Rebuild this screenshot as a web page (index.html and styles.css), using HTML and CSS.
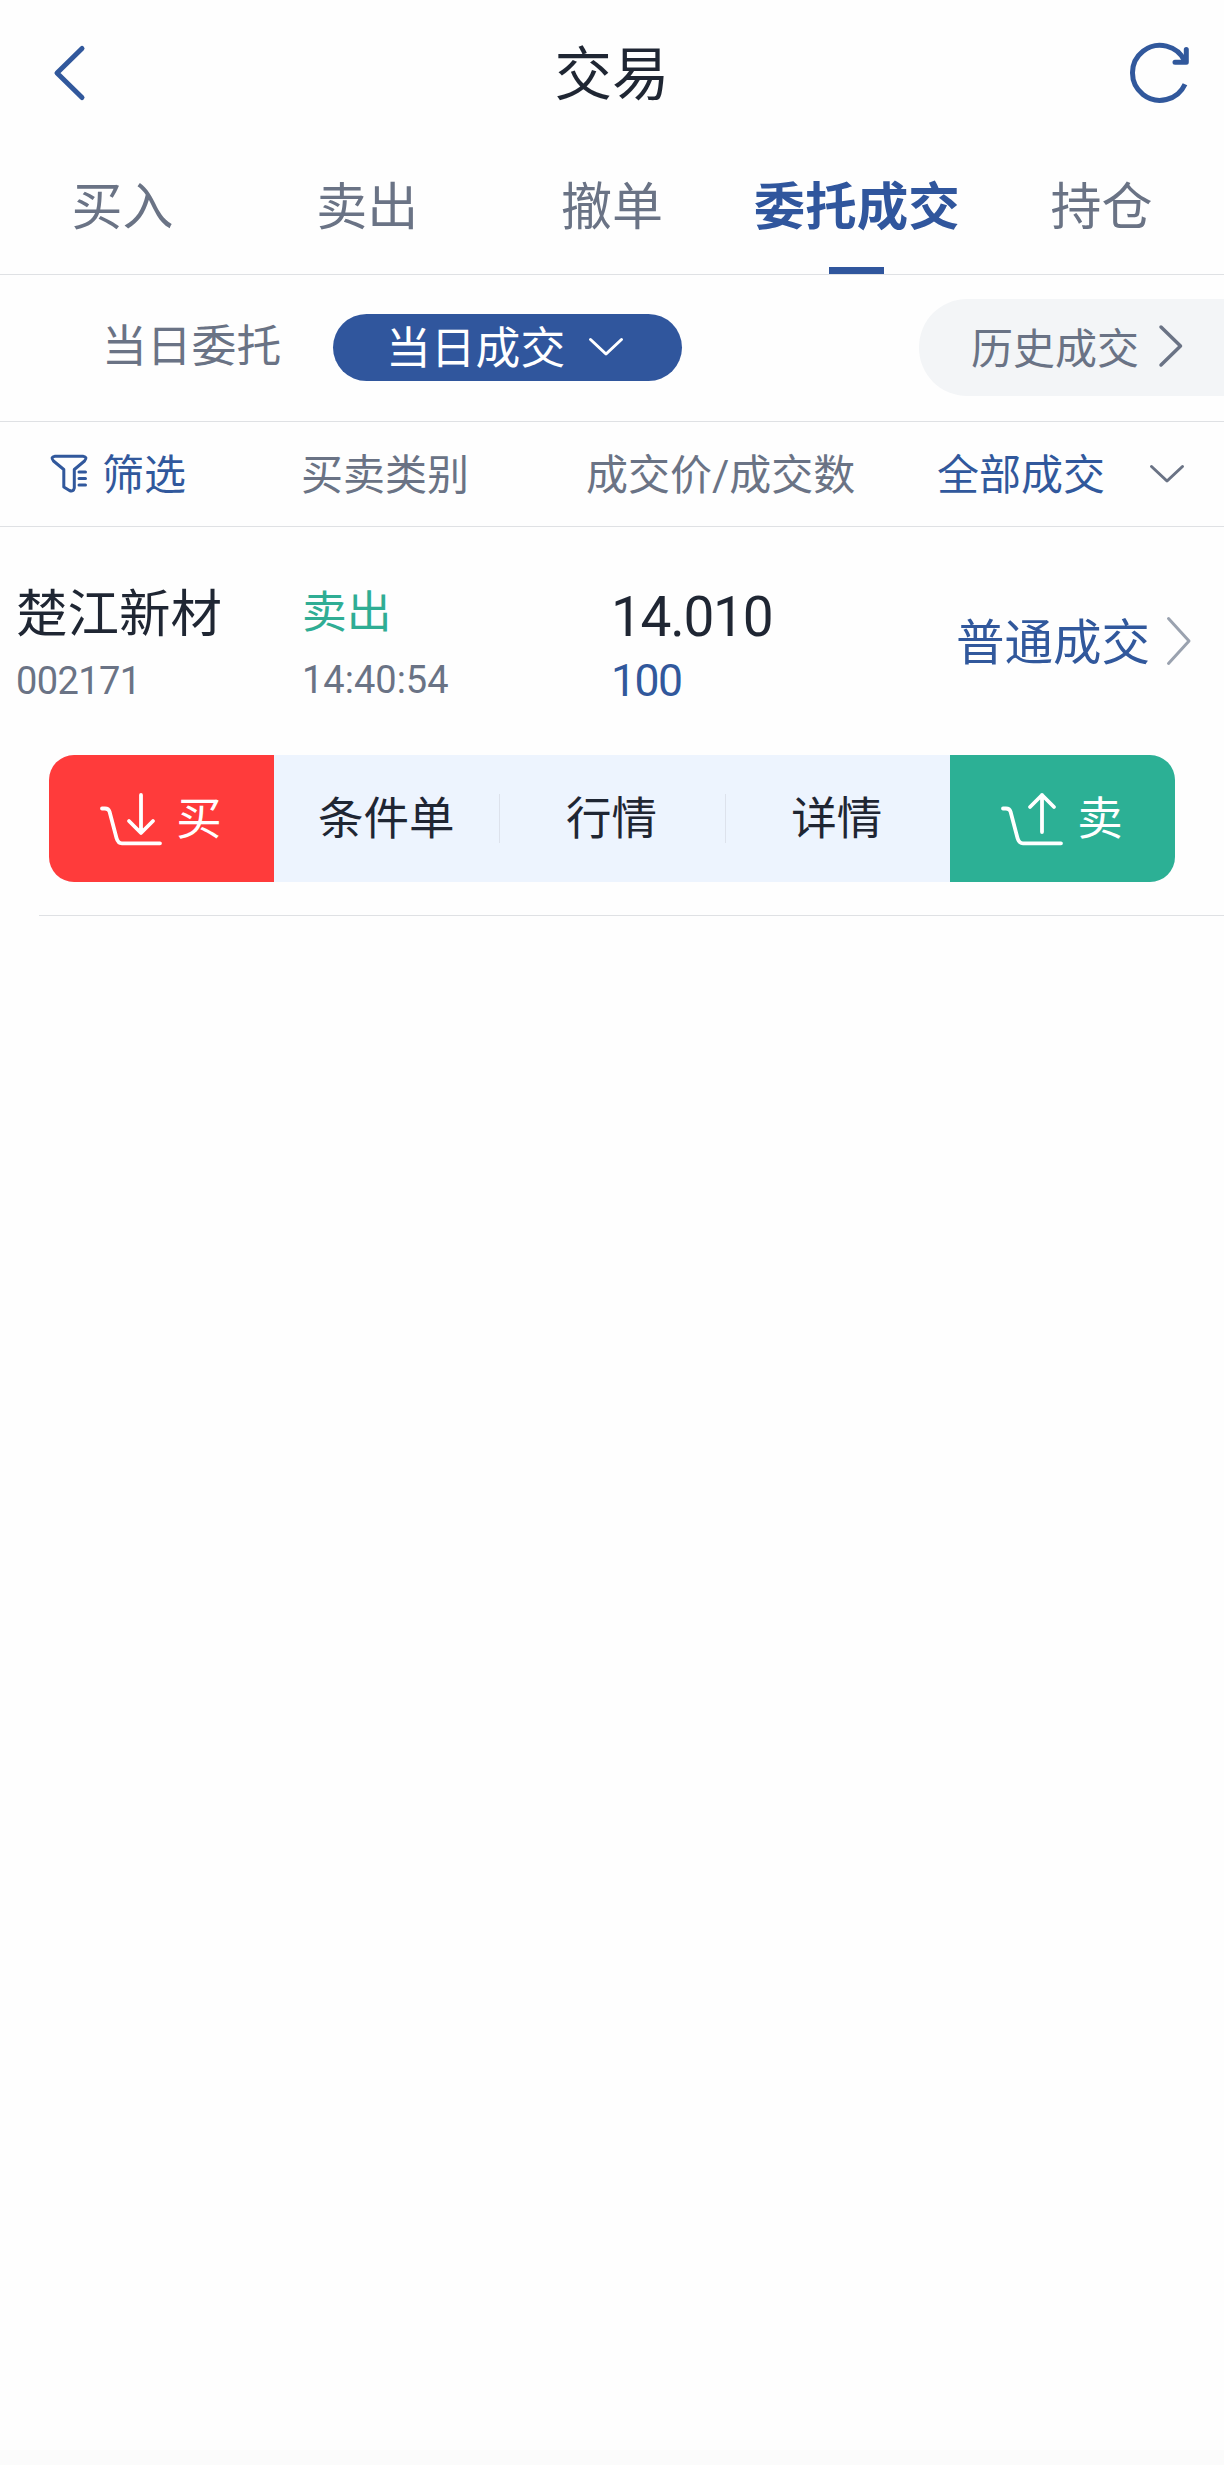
FILE: index.html
```html
<!DOCTYPE html>
<html lang="zh-CN">
<head>
<meta charset="utf-8">
<title>交易</title>
<link rel="stylesheet" href="styles.css">
</head>
<body>
<div class="app">
  <header class="topbar">
    <svg class="back" width="36" height="60" viewBox="0 0 36 60"><path d="M31 5.500L6 30L31 54.500"/></svg>
    <h1 class="title">交易</h1>
    <svg class="refresh" width="64" height="64" viewBox="0 0 64 64"><path d="M56 43.200A27.500 27.500 0 1 1 56 20.400"/><path class="arrow" d="M57.300 8.500V21.300H46"/></svg>
  </header>

  <nav class="tabs">
    <a class="tab">买入</a>
    <a class="tab">卖出</a>
    <a class="tab">撤单</a>
    <a class="tab tab-active">委托成交</a>
    <a class="tab">持仓</a>
  </nav>

  <section class="subtabs">
    <span class="today-orders">当日委托</span>
    <span class="today-deals">当日成交
      <svg width="36" height="20" viewBox="0 0 36 20"><path d="M2.500 2.500L18 17L33.500 2.500"/></svg>
    </span>
    <span class="history">历史成交
      <svg width="26" height="44" viewBox="0 0 26 44"><path d="M3 3L22.500 22L3 41"/></svg>
    </span>
  </section>

  <section class="columns">
    <span class="filter">
      <svg width="38" height="40" viewBox="0 0 38 40"><path d="M5 2.200H33Q38 3 34.500 7L24.300 15.500V34Q23.500 38 19.500 36.500L13.800 33V15.500L3.500 7Q0 3 5 2.200Z"/><path d="M29 18H35.500M29 24.500H35.500M29 31H35.500"/></svg>
      <span class="lift">筛选</span>
    </span>
    <span class="col-type lift">买卖类别</span>
    <span class="col-price lift">成交价/成交数</span>
    <span class="col-all lift">全部成交</span>
    <svg class="col-arrow" width="36" height="20" viewBox="0 0 36 20"><path d="M2.500 2.500L18 17L33.500 2.500"/></svg>
  </section>

  <article class="deal">
    <div class="deal-row">
      <div class="cell stock"><span class="name">楚江新材</span><span class="code">002171</span></div>
      <div class="cell side"><span class="direction">卖出</span><span class="time">14:40:54</span></div>
      <div class="cell amount"><span class="price">14.010</span><span class="qty">100</span></div>
      <div class="kind"><span class="lift">普通成交</span>
        <svg width="26" height="50" viewBox="0 0 26 50"><path d="M2.500 2.500L23 25L2.500 47.500"/></svg>
      </div>
    </div>
    <div class="actions">
      <a class="action buy"><svg width="62" height="56" viewBox="0 0 62 56"><path d="M2 17.500H5Q8.500 17.500 9.500 20.500L16.500 47Q18 52.300 22 52.300H60"/><path d="M41 4V41M29 30L41 42L53 30"/></svg>买</a>
      <a class="action">条件单</a>
      <a class="action divided">行情</a>
      <a class="action divided">详情</a>
      <a class="action sell"><svg width="62" height="56" viewBox="0 0 62 56"><path d="M2 17.500H5Q8.500 17.500 9.500 20.500L16.500 47Q18 52.300 22 52.300H60"/><path d="M41 41V4M29 16L41 4L53 16"/></svg>卖</a>
    </div>
  </article>
  <footer class="bottom"></footer>
</div>
</body>
</html>
```
FILE: styles.css
```css
* { box-sizing: border-box; }

body {
  margin: 0;
  background: #fefefe;
  color: #1f2633;
  font-family: Roboto, "Noto Sans CJK SC", sans-serif;
}

.app {
  width: 1224px;
  height: 2465px;
  display: flex;
  flex-direction: column;
  white-space: nowrap;
  overflow: hidden;
}

svg {
  display: block;
  flex: none;
  fill: none;
  stroke: currentColor;
  stroke-width: 3;
  stroke-linecap: round;
  stroke-linejoin: round;
}

.topbar {
  height: 146px;
  display: flex;
  align-items: center;
  justify-content: space-between;
  padding: 0 31px 0 51px;
  color: #31589c;
}
.back { stroke-width: 5; }
.title {
  margin: 0 0 0 8px;
  padding-top: 6px;
  color: #1f2633;
  font-size: 57.500px;
  font-weight: 400;
  line-height: 80px;
}
.refresh { stroke-width: 5; stroke-linecap: butt; }
.refresh .arrow { stroke-linecap: round; }

.tabs {
  height: 129px;
  display: grid;
  grid-template-columns: repeat(5, 1fr);
  border-bottom: 1px solid #dfe1e4;
}
.tab {
  display: flex;
  flex-direction: column;
  align-items: center;
  justify-content: space-between;
  padding-top: 22px;
  color: #6a7385;
  font-size: 51px;
  line-height: 80px;
}
.tab-active {
  color: #30569d;
  font-size: 51.500px;
  font-weight: 700;
}
.tab-active::after {
  content: "";
  width: 55px;
  height: 7px;
  background: #30569d;
}

.subtabs {
  height: 147px;
  display: flex;
  align-items: center;
  padding: 0 0 2px 102px;
  border-bottom: 1px solid #dfe1e4;
  color: #6a7385;
  font-size: 44.800px;
}
.today-orders {
  width: 231px;
  line-height: 60px;
  margin-bottom: 1px;
}
.today-deals {
  width: 349px;
  height: 67px;
  display: flex;
  align-items: center;
  gap: 23px;
  padding: 0 0 6px 53px;
  border-radius: 34px;
  background: #30569d;
  color: #fff;
}
.today-deals svg { margin-top: 6px; }
.history {
  width: 305px;
  height: 97px;
  display: flex;
  align-items: center;
  gap: 19px;
  margin-left: auto;
  padding: 0 0 3px 52px;
  border-radius: 48px 0 0 48px;
  background: #f3f5f7;
  font-size: 42px;
}
.history svg { stroke-width: 3.500; }

.columns {
  height: 105px;
  display: flex;
  align-items: center;
  padding: 0 39px 0 50px;
  border-bottom: 1px solid #dfe1e4;
  color: #6a7385;
  font-size: 42px;
}
.lift { padding-bottom: 5px; }
.filter {
  width: 251px;
  display: flex;
  align-items: center;
  gap: 14px;
  color: #31589c;
}
.col-type { width: 285px; }
.col-price { width: 351px; }
.col-all { color: #31589c; }
.col-arrow { margin-left: auto; }

.deal {
  height: 389px;
  display: flex;
  flex-direction: column;
  margin-left: 39px;
  border-bottom: 1px solid #dfe1e4;
}
.deal-row {
  height: 228px;
  display: flex;
  margin-left: -23px;
}
.cell {
  display: flex;
  flex-direction: column;
}
.stock { width: 286px; }
.side { width: 309px; }
.name {
  padding-top: 53px;
  font-size: 51.500px;
  line-height: 70px;
}
.code, .time {
  color: #6a7385;
  font-size: 38px;
  line-height: 44px;
  letter-spacing: -0.600px;
}
.code { padding-top: 9px; }
.direction {
  padding-top: 53px;
  color: #2fad94;
  font-size: 44.800px;
  line-height: 66px;
}
.time {
  padding-top: 12px;
  letter-spacing: 0;
}
.price {
  padding-top: 58px;
  font-size: 55px;
  line-height: 64px;
  letter-spacing: -1.300px;
}
.qty {
  padding-top: 6px;
  color: #31589c;
  font-size: 44.500px;
  line-height: 52px;
  letter-spacing: -1.500px;
}
.kind {
  height: 80px;
  display: flex;
  align-items: center;
  gap: 16px;
  margin: 74px 32px 0 auto;
  color: #31589c;
  font-size: 48.500px;
}
.kind svg { color: #9aa2af; }

.actions {
  width: 1126px;
  height: 127px;
  display: grid;
  grid-template-columns: repeat(5, 1fr);
  margin-left: 10px;
  border-radius: 25px;
  background: #edf4fe;
  overflow: hidden;
}
.action {
  display: flex;
  align-items: center;
  justify-content: center;
  padding: 2px 1px 0 0;
  font-size: 45.500px;
  line-height: 60px;
}
.divided {
  background: linear-gradient(#dde2ec, #dde2ec) left center / 1px 49px no-repeat;
}
.buy, .sell {
  gap: 14px;
  color: #fff;
}
.buy { background: #ff3b3b; }
.sell { background: #2cb095; }
.buy svg, .sell svg {
  margin-top: -2px;
  stroke-width: 3.800;
}

.bottom {
  height: 15px;
  margin-top: auto;
  background: #fbfbfb;
}
```
